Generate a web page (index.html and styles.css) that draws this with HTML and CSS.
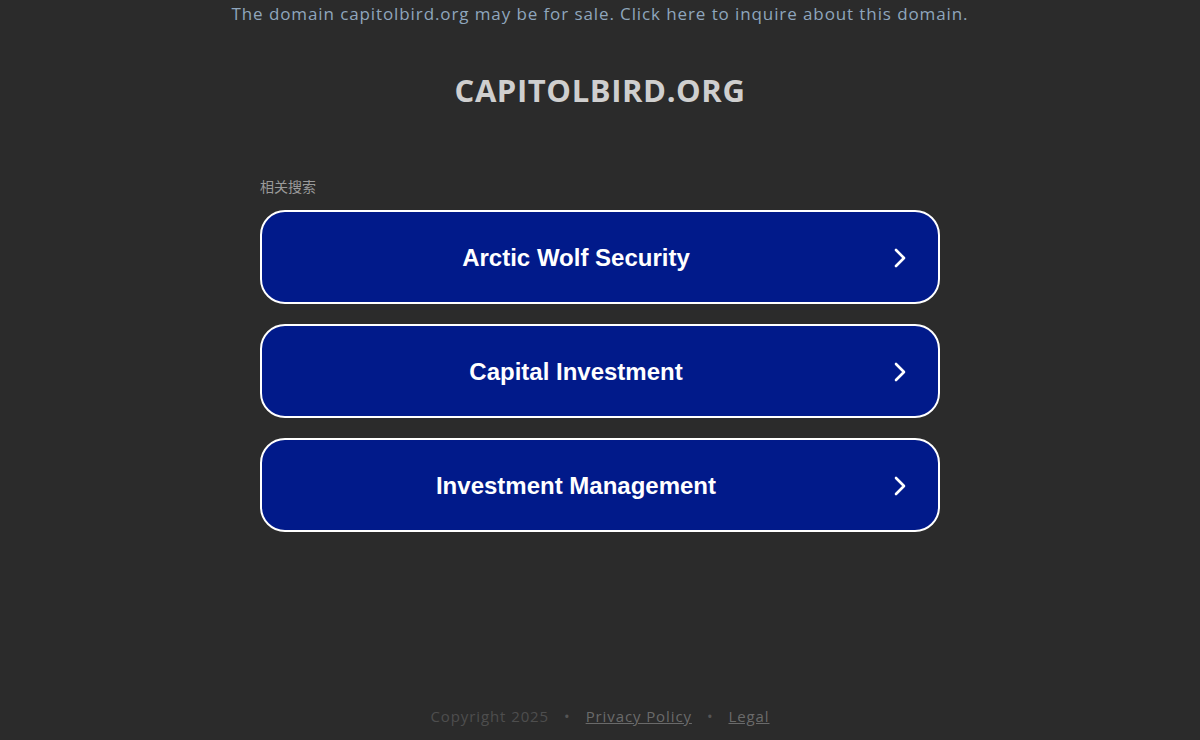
FILE: index.html
```html
<!DOCTYPE html>
<html>
<head>
<meta charset="utf-8">
<link rel="stylesheet" href="styles.css">
</head>
<body>
<div class="page">
  <div class="topbar">The domain capitolbird.org may be for sale. Click here to inquire about this domain.</div>
  <h1 class="title">CAPITOLBIRD.ORG</h1>
  <div class="content">
    <div class="related">相关搜索</div>
    <div class="list">
      <a class="item"><span class="label">Arctic Wolf Security</span><svg class="chev" viewBox="0 0 16 24" width="16" height="24"><path d="M4 4 L12 12 L4 20" fill="none" stroke="#fff" stroke-width="2.6" stroke-linecap="round" stroke-linejoin="round"/></svg></a>
      <a class="item"><span class="label">Capital Investment</span><svg class="chev" viewBox="0 0 16 24" width="16" height="24"><path d="M4 4 L12 12 L4 20" fill="none" stroke="#fff" stroke-width="2.6" stroke-linecap="round" stroke-linejoin="round"/></svg></a>
      <a class="item"><span class="label">Investment Management</span><svg class="chev" viewBox="0 0 16 24" width="16" height="24"><path d="M4 4 L12 12 L4 20" fill="none" stroke="#fff" stroke-width="2.6" stroke-linecap="round" stroke-linejoin="round"/></svg></a>
    </div>
  </div>
  <div class="spacer"></div>
  <div class="footer">
    <span class="copy">Copyright 2025</span>
    <span class="dot">•</span>
    <a class="flink">Privacy Policy</a>
    <span class="dot">•</span>
    <a class="flink">Legal</a>
  </div>
</div>
</body>
</html>
```

FILE: styles.css
```css
html, body {
  margin: 0;
  padding: 0;
  background: #2b2b2b;
  height: 100%;
}
.page {
  height: 740px;
  display: flex;
  flex-direction: column;
  align-items: center;
  font-family: "Open Sans", "DejaVu Sans", sans-serif;
}
.topbar {
  margin-top: 3px;
  font-size: 17px;
  line-height: 22px;
  color: #8fa6bd;
  letter-spacing: 0.9px;
}
.title {
  margin: 45px 0 0 0;
  font-size: 31px;
  line-height: 40px;
  font-weight: 700;
  color: #cfcfcf;
  letter-spacing: 0.6px;
}
.content {
  width: 680px;
  margin-top: 67px;
}
.related {
  font-family: "Noto Sans CJK SC", sans-serif;
  font-size: 14px;
  line-height: 18px;
  color: #9a9a9a;
  margin-bottom: 15px;
}
.list {
  display: flex;
  flex-direction: column;
  gap: 20px;
}
.item {
  box-sizing: border-box;
  height: 94px;
  border: 2px solid #ffffff;
  border-radius: 25px;
  background: #011a8a;
  display: flex;
  align-items: center;
  padding: 2px 30px 0 8px;
  text-decoration: none;
}
.label {
  flex: 1;
  text-align: center;
  font-family: "Liberation Sans", Arial, sans-serif;
  font-weight: 700;
  font-size: 24px;
  color: #ffffff;
}
.chev {
  margin-left: 10px;
  flex: none;
}
.spacer {
  flex: 1;
}
.footer {
  font-size: 15px;
  line-height: 20px;
  color: #4e4e4e;
  margin-bottom: 14px;
  display: flex;
  gap: 15px;
  letter-spacing: 0.9px;
}
.flink {
  color: #6a6a6a;
  text-decoration: underline;
}
.dot {
  color: #555;
}
```
